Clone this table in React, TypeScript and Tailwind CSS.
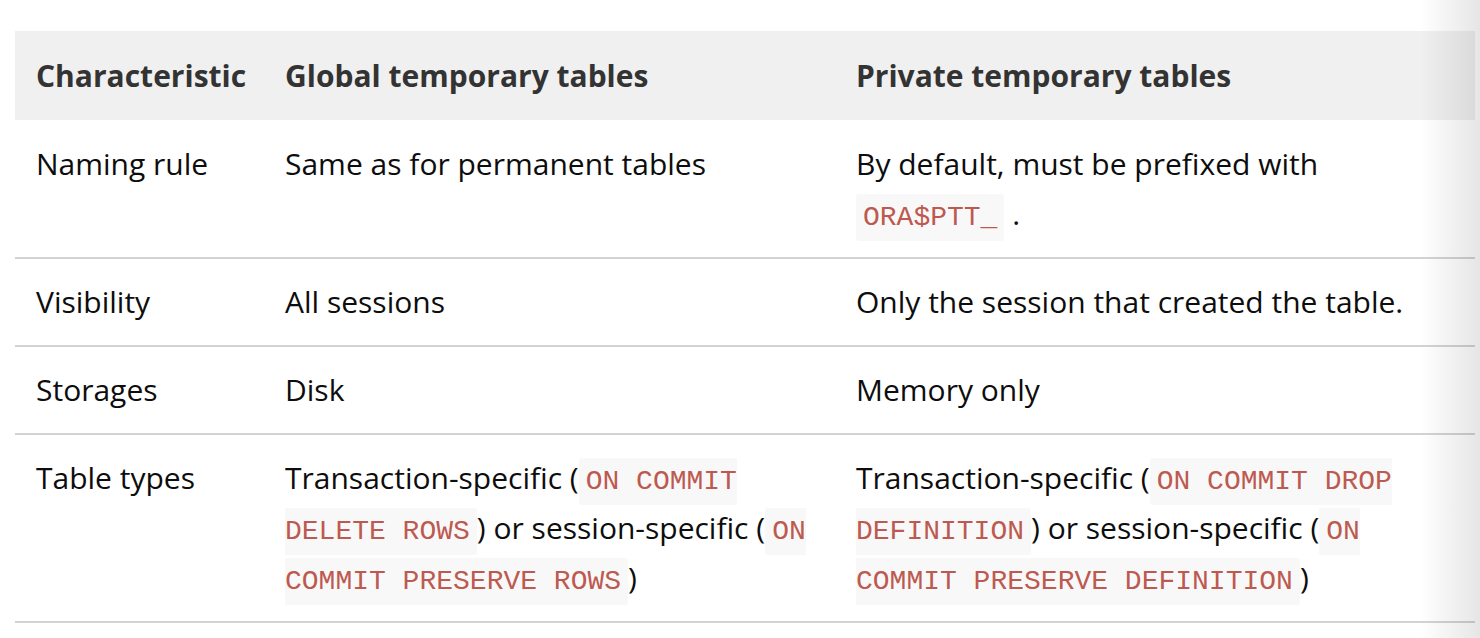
import React from "react"

const Code = ({ children }: { children: React.ReactNode }) => (
  <code className="font-['Liberation_Mono','Courier_New',monospace] text-[28px] leading-[20px] text-[#bd5a50] bg-[#f9f8f9] px-[7px] py-[8px] rounded-[3px]">
    {children}
  </code>
)

const rows: { name: string; global: React.ReactNode; priv: React.ReactNode }[] = [
  {
    name: "Naming rule",
    global: "Same as for permanent tables",
    priv: (
      <>
        By default, must be prefixed with <Code>ORA$PTT_</Code> .
      </>
    ),
  },
  { name: "Visibility", global: "All sessions", priv: "Only the session that created the table." },
  { name: "Storages", global: "Disk", priv: "Memory only" },
  {
    name: "Table types",
    global: (
      <>
        Transaction-specific (<Code>ON COMMIT DELETE ROWS</Code>) or session-specific (
        <Code>ON COMMIT PRESERVE ROWS</Code>)
      </>
    ),
    priv: (
      <>
        Transaction-specific (<Code>ON COMMIT DROP DEFINITION</Code>) or session-specific (
        <Code>ON COMMIT PRESERVE DEFINITION</Code>)
      </>
    ),
  },
]

export default function App() {
  return (
    <div className="relative w-[1480px] h-[638px] bg-white overflow-hidden font-['Open_Sans',sans-serif]">
      <div className="pt-[31px] pl-[15px]">
        <table className="table-fixed border-collapse w-[1460px] text-[30px] leading-[50px] text-[#0d0d0d]">
          <colgroup>
            <col className="w-[249px]" />
            <col className="w-[571px]" />
            <col className="w-[640px]" />
          </colgroup>
          <thead>
            <tr className="bg-[#f0f0f0] text-[#333] font-bold text-left">
              <th className="px-[21px] pt-[20px] pb-[19px] align-top">Characteristic</th>
              <th className="px-[21px] pt-[20px] pb-[19px] align-top">Global temporary tables</th>
              <th className="px-[21px] pt-[20px] pb-[19px] align-top">Private temporary tables</th>
            </tr>
          </thead>
          <tbody>
            {rows.map((r, i) => (
              <tr key={r.name} className="border-b-2 border-[#d3d3d3]">
                <td className={`px-[21px] pb-[18px] align-top ${i === 0 ? "pt-[19px]" : "pt-[18px]"}`}>{r.name}</td>
                <td className={`px-[21px] pb-[18px] align-top ${i === 0 ? "pt-[19px]" : "pt-[18px]"}`}>{r.global}</td>
                <td className={`px-[21px] pb-[18px] align-top ${i === 0 ? "pt-[19px]" : "pt-[18px]"}`}>{r.priv}</td>
              </tr>
            ))}
          </tbody>
        </table>
      </div>
      <div className="absolute right-0 top-0 bottom-0 w-[60px] bg-gradient-to-r from-transparent to-black/10" />
    </div>
  )
}
